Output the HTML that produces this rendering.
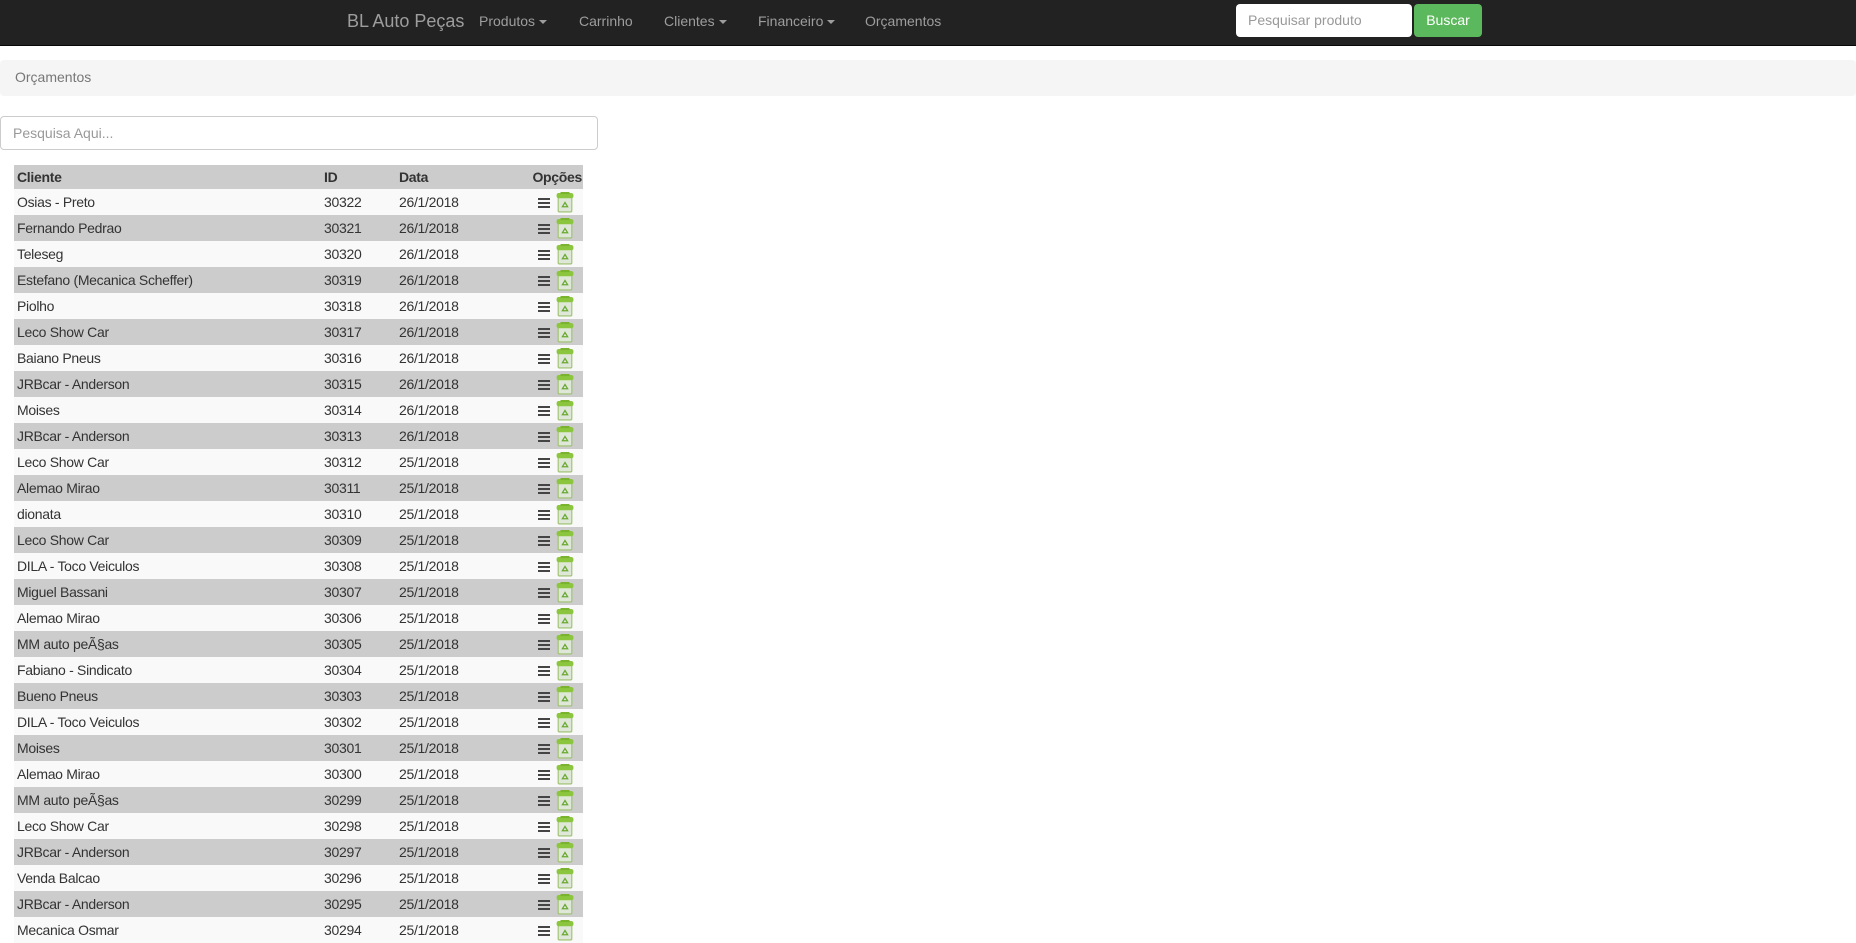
<!DOCTYPE html>
<html><head><meta charset="utf-8"><style>
*{box-sizing:border-box}
body{margin:0;width:1856px;height:938px;overflow:hidden;background:#fff;font-family:"Liberation Sans",sans-serif;font-size:14px;color:#333}
.nav{position:absolute;left:0;top:0;width:1856px;height:46px;background:#222;border-bottom:1px solid #080808}
.nav span{position:absolute;top:13px;color:#9d9d9d;font-size:14px}
.brand{font-size:18px!important;top:11px!important}
.caret{display:inline-block;width:0;height:0;border-left:4px solid transparent;border-right:4px solid transparent;border-top:4px solid #9d9d9d;vertical-align:middle;margin-left:4px}
.sinput{position:absolute;left:1236px;top:4px;width:176px;height:33px;background:#fff;border-radius:4px;color:#999;font-size:14px;padding:8px 12px}
.btn{position:absolute;left:1414px;top:4px;width:68px;height:33px;background:#5cb85c;border-radius:4px;color:#fff;font-size:14px;text-align:center;line-height:33px}
.bc{position:absolute;left:0;top:60px;width:1856px;height:36px;background:#f5f5f5;border-radius:4px;color:#777;font-size:14px;padding:9px 15px}
.inp{position:absolute;left:0;top:116px;width:598px;height:34px;border:1px solid #ccc;border-radius:4px;color:#999;font-size:14px;padding:8px 12px}
table{position:absolute;left:14px;top:165px;width:569px;border-collapse:collapse;font-size:14px;letter-spacing:-0.3px}
th{background:#ccc;text-align:left;height:24px;padding:0 3px;font-weight:bold;color:#333}
td{height:26px;padding:0 3px;white-space:nowrap}
tr:nth-child(odd) td{background:#f9f9f9}
tr:nth-child(even) td{background:#ccc}
.c1{width:307px}.c2{width:75px}
.ic{position:relative;display:inline-block;width:48px;height:24px;vertical-align:middle}
.hb{position:absolute;left:3px;top:8px;width:12px;height:10px;background:repeating-linear-gradient(#444 0 2px,transparent 2px 4px)}
.tr{position:absolute;left:21px;top:2px;width:18px;height:21px}
</style></head><body>
<div class="nav">
<span class="brand" style="left:347px">BL Auto Peças</span>
<span style="left:479px">Produtos<i class="caret"></i></span>
<span style="left:579px">Carrinho</span>
<span style="left:664px">Clientes<i class="caret"></i></span>
<span style="left:758px">Financeiro<i class="caret"></i></span>
<span style="left:865px">Orçamentos</span>
<div class="sinput">Pesquisar produto</div>
<div class="btn">Buscar</div>
</div>
<div class="bc">Orçamentos</div>
<div class="inp">Pesquisa Aqui...</div>
<table>
<tr><th class="c1">Cliente</th><th class="c2">ID</th><th style="width:100px">Data</th><th style="text-align:right;padding-right:1px">Opções</th></tr>
<tbody id="tb"></tbody>
</table>
<script>
var d=[["Osias - Preto",30322,"26"],["Fernando Pedrao",30321,"26"],["Teleseg",30320,"26"],["Estefano (Mecanica Scheffer)",30319,"26"],["Piolho",30318,"26"],["Leco Show Car",30317,"26"],["Baiano Pneus",30316,"26"],["JRBcar - Anderson",30315,"26"],["Moises",30314,"26"],["JRBcar - Anderson",30313,"26"],["Leco Show Car",30312,"25"],["Alemao Mirao",30311,"25"],["dionata",30310,"25"],["Leco Show Car",30309,"25"],["DILA - Toco Veiculos",30308,"25"],["Miguel Bassani",30307,"25"],["Alemao Mirao",30306,"25"],["MM auto peÃ§as",30305,"25"],["Fabiano - Sindicato",30304,"25"],["Bueno Pneus",30303,"25"],["DILA - Toco Veiculos",30302,"25"],["Moises",30301,"25"],["Alemao Mirao",30300,"25"],["MM auto peÃ§as",30299,"25"],["Leco Show Car",30298,"25"],["JRBcar - Anderson",30297,"25"],["Venda Balcao",30296,"25"],["JRBcar - Anderson",30295,"25"],["Mecanica Osmar",30294,"25"]];
var ic='<span class="ic"><span class="hb"></span><svg class="tr" viewBox="0 0 17 20"><rect x="2" y="5" width="13" height="14" rx="1" fill="#dfe8d8" stroke="#9bbf6a"/><rect x="0.5" y="1" width="16" height="5" rx="2" fill="#8cc63f"/><rect x="4" y="0" width="9" height="2" rx="1" fill="#7ab32e"/><path d="M8.5 10l-2.5 4h5z" fill="none" stroke="#6aa832" stroke-width="1.2"/></svg></span>';
var h='';d.forEach(function(r){h+='<tr><td>'+r[0]+'</td><td>'+r[1]+'</td><td>'+r[2]+'/1/2018</td><td style="text-align:right;padding-right:0">'+ic+'</td></tr>'});
document.getElementById('tb').innerHTML=h;
</script>
</body></html>
